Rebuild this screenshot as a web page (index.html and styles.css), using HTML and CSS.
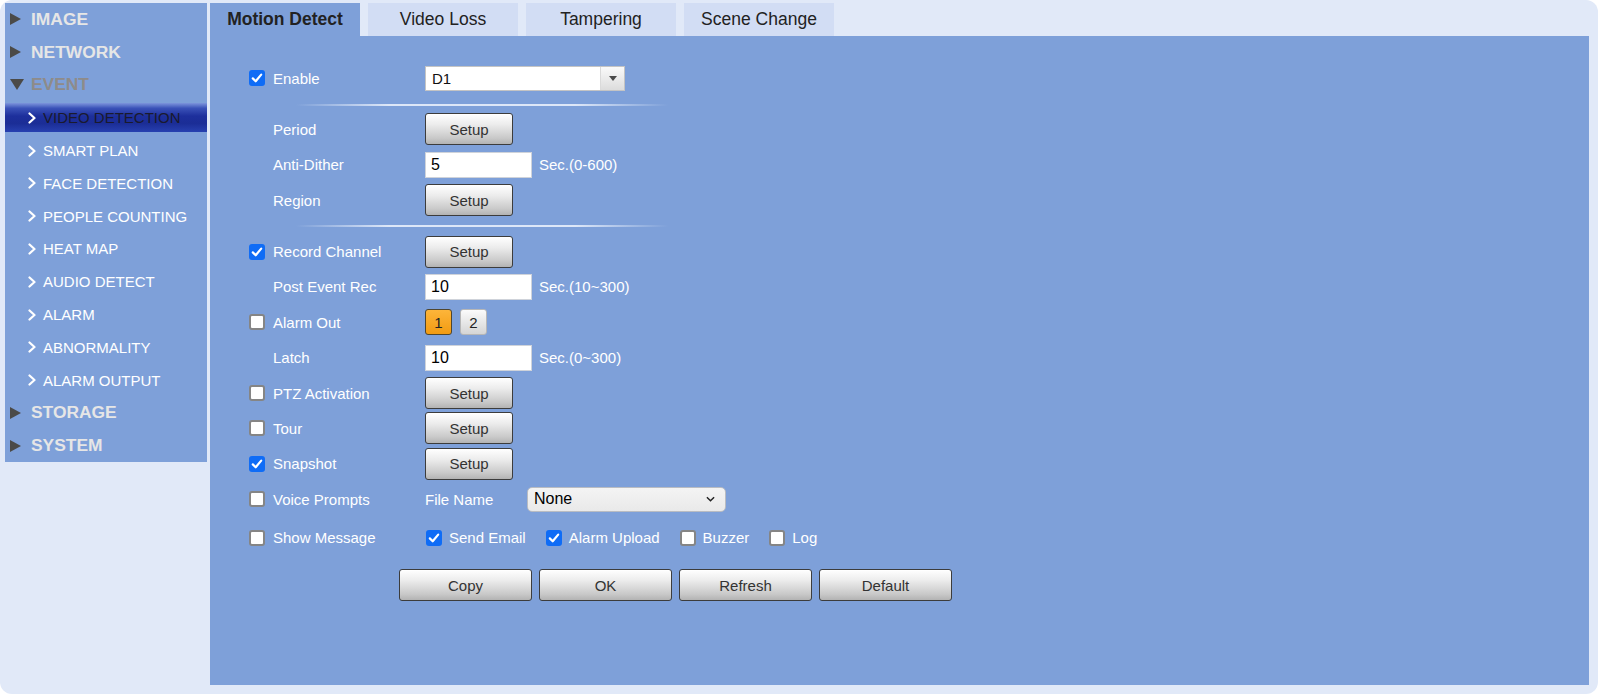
FILE: index.html
```html
<!DOCTYPE html>
<html>
<head>
<meta charset="utf-8">
<link rel="stylesheet" href="styles.css">
</head>
<body>
<div class="frame">
  <nav class="sidebar">
    <div class="grp"><span class="tri"></span>IMAGE</div>
    <div class="grp"><span class="tri"></span>NETWORK</div>
    <div class="grp open"><span class="tri down"></span>EVENT</div>
    <div class="sub active"><svg class="chev" viewBox="0 0 8 12" width="8" height="12"><path d="M1.5 1.5 L6.5 6 L1.5 10.5"/></svg>VIDEO DETECTION</div>
    <div class="sub"><svg class="chev" viewBox="0 0 8 12" width="8" height="12"><path d="M1.5 1.5 L6.5 6 L1.5 10.5"/></svg>SMART PLAN</div>
    <div class="sub"><svg class="chev" viewBox="0 0 8 12" width="8" height="12"><path d="M1.5 1.5 L6.5 6 L1.5 10.5"/></svg>FACE DETECTION</div>
    <div class="sub"><svg class="chev" viewBox="0 0 8 12" width="8" height="12"><path d="M1.5 1.5 L6.5 6 L1.5 10.5"/></svg>PEOPLE COUNTING</div>
    <div class="sub"><svg class="chev" viewBox="0 0 8 12" width="8" height="12"><path d="M1.5 1.5 L6.5 6 L1.5 10.5"/></svg>HEAT MAP</div>
    <div class="sub"><svg class="chev" viewBox="0 0 8 12" width="8" height="12"><path d="M1.5 1.5 L6.5 6 L1.5 10.5"/></svg>AUDIO DETECT</div>
    <div class="sub"><svg class="chev" viewBox="0 0 8 12" width="8" height="12"><path d="M1.5 1.5 L6.5 6 L1.5 10.5"/></svg>ALARM</div>
    <div class="sub"><svg class="chev" viewBox="0 0 8 12" width="8" height="12"><path d="M1.5 1.5 L6.5 6 L1.5 10.5"/></svg>ABNORMALITY</div>
    <div class="sub"><svg class="chev" viewBox="0 0 8 12" width="8" height="12"><path d="M1.5 1.5 L6.5 6 L1.5 10.5"/></svg>ALARM OUTPUT</div>
    <div class="grp"><span class="tri"></span>STORAGE</div>
    <div class="grp"><span class="tri"></span>SYSTEM</div>
  </nav>

  <main class="main">
    <div class="tabs">
      <div class="tab on">Motion Detect</div>
      <div class="tab">Video Loss</div>
      <div class="tab">Tampering</div>
      <div class="tab">Scene Change</div>
    </div>
    <div class="panel">
      <div class="form">
        <div class="row">
          <div class="lab"><span class="cb on"><svg viewBox="0 0 16 16" width="16" height="16"><path d="M3.8 8.4 L6.7 11.3 L12.2 4.6"/></svg></span>Enable</div>
          <div class="dd"><span class="dd-val">D1</span><span class="dd-btn"><span class="dd-tri"></span></span></div>
        </div>
        <div class="sep"></div>
        <div class="row">
          <div class="lab ind">Period</div>
          <button class="btn setup">Setup</button>
        </div>
        <div class="row">
          <div class="lab ind">Anti-Dither</div>
          <div class="inp">5</div><span class="unit">Sec.(0-600)</span>
        </div>
        <div class="row">
          <div class="lab ind">Region</div>
          <button class="btn setup">Setup</button>
        </div>
        <div class="sep sep2"></div>
        <div class="row">
          <div class="lab"><span class="cb on"><svg viewBox="0 0 16 16" width="16" height="16"><path d="M3.8 8.4 L6.7 11.3 L12.2 4.6"/></svg></span>Record Channel</div>
          <button class="btn setup">Setup</button>
        </div>
        <div class="row">
          <div class="lab ind">Post Event Rec</div>
          <div class="inp">10</div><span class="unit">Sec.(10~300)</span>
        </div>
        <div class="row">
          <div class="lab"><span class="cb"></span>Alarm Out</div>
          <div class="chips"><span class="chip sel">1</span><span class="chip">2</span></div>
        </div>
        <div class="row">
          <div class="lab ind">Latch</div>
          <div class="inp">10</div><span class="unit">Sec.(0~300)</span>
        </div>
        <div class="row">
          <div class="lab"><span class="cb"></span>PTZ Activation</div>
          <button class="btn setup">Setup</button>
        </div>
        <div class="row">
          <div class="lab"><span class="cb"></span>Tour</div>
          <button class="btn setup">Setup</button>
        </div>
        <div class="row">
          <div class="lab"><span class="cb on"><svg viewBox="0 0 16 16" width="16" height="16"><path d="M3.8 8.4 L6.7 11.3 L12.2 4.6"/></svg></span>Snapshot</div>
          <button class="btn setup">Setup</button>
        </div>
        <div class="row">
          <div class="lab"><span class="cb"></span>Voice Prompts</div>
          <span class="fname">File Name</span>
          <div class="sel-box"><span>None</span><svg class="sel-chev" viewBox="0 0 10 6" width="9" height="6"><path d="M1 1 L5 5 L9 1"/></svg></div>
        </div>
        <div class="row row-msg">
          <div class="lab"><span class="cb"></span>Show Message</div>
          <div class="opts">
            <span class="opt"><span class="cb on"><svg viewBox="0 0 16 16" width="16" height="16"><path d="M3.8 8.4 L6.7 11.3 L12.2 4.6"/></svg></span>Send Email</span>
            <span class="opt"><span class="cb on"><svg viewBox="0 0 16 16" width="16" height="16"><path d="M3.8 8.4 L6.7 11.3 L12.2 4.6"/></svg></span>Alarm Upload</span>
            <span class="opt"><span class="cb"></span>Buzzer</span>
            <span class="opt"><span class="cb"></span>Log</span>
          </div>
        </div>
        <div class="actions">
          <button class="btn big">Copy</button>
          <button class="btn big">OK</button>
          <button class="btn big">Refresh</button>
          <button class="btn big">Default</button>
        </div>
      </div>
    </div>
  </main>
</div>
</body>
</html>
```

FILE: styles.css
```css
html, body {
  margin: 0;
  padding: 0;
  background: #ffffff;
}
body {
  font-family: "Liberation Sans", Arial, sans-serif;
}
.frame {
  width: 1598px;
  height: 694px;
  box-sizing: border-box;
  background: #e1e9f8;
  border-radius: 12px;
  padding: 3px 9px 9px 5px;
  display: flex;
  gap: 3px;
  align-items: flex-start;
}

/* sidebar */
.sidebar {
  width: 202px;
  background: #7ea0d9;
  display: flex;
  flex-direction: column;
}
.grp {
  height: 32.8px;
  display: flex;
  align-items: center;
  padding-left: 5px;
  font-size: 17.4px;
  font-weight: bold;
  color: #e6e6e6;
}
.grp.open {
  color: #8e8b8a;
}
.tri {
  width: 0;
  height: 0;
  border-left: 11px solid #4b4a48;
  border-top: 6.5px solid transparent;
  border-bottom: 6.5px solid transparent;
  margin-right: 10px;
}
.tri.down {
  border-left: 7px solid transparent;
  border-right: 7px solid transparent;
  border-top: 11px solid #4b4a48;
  border-bottom: 0;
  margin-right: 7px;
}
.sub {
  height: 32.8px;
  display: flex;
  align-items: center;
  padding-left: 23px;
  font-size: 15px;
  color: #ffffff;
  box-sizing: border-box;
}
.sub.active {
  background: linear-gradient(to bottom, #7d95dc 0%, #3a52b8 18%, #1d2f9c 45%, #1b2d96 70%, #2740b0 100%);
  color: #1a1a2e;
  height: 29px;
  margin: 2px 0 1.8px;
}
.chev {
  margin-right: 7px;
  flex: none;
}
.chev path {
  fill: none;
  stroke: #ffffff;
  stroke-width: 2.2;
  stroke-linecap: round;
  stroke-linejoin: round;
}

/* main */
.main {
  flex: 1;
  align-self: stretch;
  display: flex;
  flex-direction: column;
}
.tabs {
  display: flex;
  gap: 8px;
  height: 33px;
}
.tab {
  width: 150px;
  display: flex;
  align-items: center;
  justify-content: center;
  background: #d2ddf4;
  font-size: 17.5px;
  color: #222222;
}
.tab.on {
  background: #7ea0d9;
  font-weight: bold;
}
.panel {
  flex: 1;
  background: #7ea0d9;
}
.form {
  padding: 24.6px 0 0 39px;
  font-size: 15px;
  color: #ffffff;
}
.row {
  height: 35.4px;
  display: flex;
  align-items: center;
}
.row-msg {
  margin-top: 3px;
}
.lab {
  width: 176px;
  flex: none;
  display: flex;
  align-items: center;
}
.lab.ind {
  padding-left: 24px;
  box-sizing: border-box;
}
.cb {
  width: 16px;
  height: 16px;
  box-sizing: border-box;
  border: 2px solid #858585;
  border-radius: 3px;
  background: #ffffff;
  margin-right: 8px;
  flex: none;
  display: inline-flex;
}
.cb.on {
  border: 0;
  background: #0f6cf6;
}
.cb svg path {
  fill: none;
  stroke: #ffffff;
  stroke-width: 2.2;
  stroke-linecap: round;
  stroke-linejoin: round;
}
.sep {
  height: 2px;
  width: 372px;
  margin: 7.6px 0 6px 47px;
  background: linear-gradient(to right, rgba(226,234,250,0), #dde7f8 25%, #dde7f8 75%, rgba(226,234,250,0));
}
.sep2 {
  margin: 7.3px 0 6.8px 47px;
}

/* dropdown D1 */
.dd {
  width: 200px;
  height: 25px;
  box-sizing: border-box;
  border: 1px solid #c4c4c4;
  background: #ffffff;
  display: flex;
  color: #111111;
}
.dd-val {
  flex: 1;
  display: flex;
  align-items: center;
  padding-left: 6px;
  font-size: 15px;
}
.dd-btn {
  width: 23px;
  border-left: 1px solid #dadada;
  background: linear-gradient(to bottom, #fafafa, #dcdcdc);
  display: flex;
  align-items: center;
  justify-content: center;
}
.dd-tri {
  width: 0;
  height: 0;
  border-left: 4.5px solid transparent;
  border-right: 4.5px solid transparent;
  border-top: 5px solid #4a4a4a;
}

/* inputs */
.inp {
  width: 107px;
  height: 26px;
  box-sizing: border-box;
  background: #ffffff;
  border: 1px solid #cfd3da;
  color: #000000;
  font-size: 16px;
  display: flex;
  align-items: center;
  padding-left: 5px;
}
.unit {
  margin-left: 7px;
}

/* buttons */
.btn {
  font-family: "Liberation Sans", Arial, sans-serif;
  font-size: 15px;
  color: #333333;
  border: 1px solid #3c3c3c;
  border-radius: 3px;
  background: linear-gradient(to bottom, #ffffff 0%, #ececec 35%, #c9c9c9 80%, #b3b3b3 100%);
  padding: 0;
  margin: 0;
  box-shadow: inset 0 1px 0 #ffffff;
}
.setup {
  width: 88px;
  height: 32px;
}
.big {
  width: 133px;
  height: 32px;
}

.chips {
  display: flex;
  gap: 8px;
}
.chip {
  width: 27px;
  height: 26px;
  box-sizing: border-box;
  border-radius: 3px;
  border: 1px solid #b7b7b7;
  background: linear-gradient(to bottom, #fbfbfb, #d5d5d5);
  color: #222222;
  font-size: 15px;
  display: flex;
  align-items: center;
  justify-content: center;
}
.chip.sel {
  border-color: #50462e;
  background: linear-gradient(to bottom, #fdb53a, #f29b12);
}

.fname {
  width: 102px;
  flex: none;
}
.sel-box {
  width: 199px;
  height: 25px;
  box-sizing: border-box;
  border: 1px solid #b9bcc2;
  border-radius: 5px;
  background: linear-gradient(to bottom, #f4f4f4, #e9e9e9);
  display: flex;
  align-items: center;
  justify-content: space-between;
  padding: 0 10px 0 6px;
  color: #000000;
  font-size: 16px;
}
.sel-chev path {
  fill: none;
  stroke: #222222;
  stroke-width: 1.6;
}

.opts {
  display: flex;
  gap: 20px;
  padding-left: 1px;
}
.opt {
  display: flex;
  align-items: center;
}
.opt .cb {
  margin-right: 7px;
}

.actions {
  display: flex;
  gap: 7px;
  margin: 14px 0 0 150px;
}
```
